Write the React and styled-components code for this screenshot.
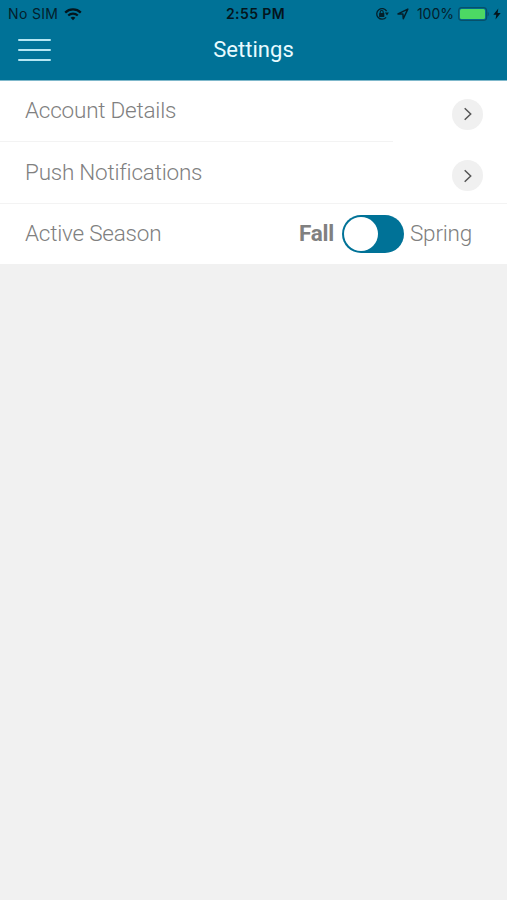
import React, {useState} from 'react';
import styled, {createGlobalStyle} from "styled-components";

const GlobalStyle = createGlobalStyle`
  * {
    box-sizing: border-box;
  }
  body {
    margin: 0;
    background-color: #f1f1f1;
    font-family: Roboto, "Liberation Sans", sans-serif;
  }
`;

const StyledPage = styled.div`
  min-height: 900px;
  background-color: #f1f1f1;
`;

const StyledHeader = styled.header`
  height: 80px;
  background-color: #007297;
`;

const StyledStatusBar = styled.div`
  display: grid;
  grid-template-columns: 1fr auto 1fr;
  align-items: center;
  height: 28px;
  padding: 0 6px 0 8px;
  color: #04202b;
  font-family: Inter, "Liberation Sans", sans-serif;
  font-size: 14px;
  line-height: 28px;
`;

const StyledStatusLeft = styled.div`
  display: flex;
  align-items: center;
  gap: 6px;
  letter-spacing: 0.35px;
`;

const StyledStatusRight = styled.div`
  display: flex;
  align-items: center;
  justify-content: flex-end;
  gap: 8px;
`;

const StyledBattery = styled.div`
  display: flex;
  align-items: center;
  gap: 4px;
`;

const StyledClock = styled.div`
  padding-left: 2px;
  color: #04151c;
  font-weight: 600;
  font-size: 14px;
  letter-spacing: 0.4px;
`;

const StyledTitleBar = styled.div`
  display: grid;
  grid-template-columns: 34px 1fr 34px;
  align-items: center;
  height: 44px;
  padding: 0 17px;
`;

const StyledMenuButton = styled.button`
  display: flex;
  padding: 0;
  border: none;
  background: none;
`;

const StyledTitle = styled.h1`
  margin: 0;
  color: #e9fbff;
  font-size: 22px;
  font-weight: 400;
  line-height: 42px;
  letter-spacing: 0.05px;
  text-align: center;
`;

const StyledList = styled.main`
  height: 184px;
  background-color: #ffffff;
  border-top: 1px solid #7fb8cb;
`;

const StyledRow = styled.div`
  display: flex;
  align-items: center;
  justify-content: space-between;
  height: ${(props) => props.$height}px;
  padding: 0 24px 0 25px;
`;

const StyledDivider = styled.div`
  width: ${(props) => props.$width};
  height: 1px;
  background-color: #f3f3f3;
`;

const StyledLabel = styled.span`
  padding-bottom: 2px;
  color: #808080;
  font-size: 22.5px;
  font-weight: ${(props) => (props.$bold ? 700 : 300)};
  line-height: 58px;
  letter-spacing: -0.22px;
`;

const StyledArrow = styled.span`
  display: flex;
  align-items: center;
  justify-content: center;
  width: 31px;
  height: 31px;
  margin-top: 6px;
  border-radius: 50%;
  background-color: #f0f0f0;
`;

const StyledSeason = styled.div`
  display: flex;
  align-items: center;
  padding-right: 11px;
`;

const StyledSwitch = styled.button`
  display: flex;
  justify-content: ${(props) => (props.$on ? 'flex-end' : 'flex-start')};
  align-items: center;
  width: 62px;
  height: 38px;
  margin: 0 6px 0 8px;
  padding: 2px;
  border: none;
  border-radius: 19px;
  background-color: #007297;
`;

const StyledKnob = styled.span`
  width: 34px;
  height: 34px;
  border-radius: 50%;
  background-color: #ffffff;
`;

const WifiIcon = () => (
    <svg width="18" height="13" viewBox="0 0 18 13" fill="none" stroke="#04151c">
        <path d="M1.2 4.6C5.5 0.4 12.5 0.4 16.8 4.6" strokeWidth="2.3" />
        <path d="M4.2 7.6C6.9 5 11.1 5 13.8 7.6" strokeWidth="2.1" />
        <path d="M6.6 9.8C8 8.5 10 8.5 11.4 9.8L9 12.2Z" fill="#04151c" stroke="none" />
    </svg>
);

const RotationLockIcon = () => (
    <svg width="14" height="14" viewBox="0 0 14 14" fill="none" stroke="#04202b">
        <path d="M11.1 10.3A5.3 5.3 0 1 1 11.6 4.2" strokeWidth="1.3" />
        <path d="M9.9 5.6H13.9L12 8.6Z" fill="#04202b" stroke="none" />
        <rect x="4.1" y="5.9" width="5.2" height="4" rx="0.5" fill="#04202b" stroke="none" />
        <path d="M5.2 6.2V5A1.5 1.5 0 0 1 8.2 5V6.2" strokeWidth="1.1" />
    </svg>
);

const LocationIcon = () => (
    <svg width="12" height="12" viewBox="0 0 12 12" fill="none" stroke="#04202b" strokeWidth="1.5" strokeLinejoin="round">
        <path d="M1 5.9L10.8 1.1L6.3 10.8L5.9 6Z" />
    </svg>
);

const BatteryIcon = () => (
    <svg width="31" height="14" viewBox="0 0 31 14">
        <rect x="0.6" y="0.6" width="28" height="12.8" rx="3.2" fill="none" stroke="#07506a" strokeWidth="1.2" />
        <rect x="2" y="2" width="25" height="10" rx="1.5" fill="#4cd964" />
        <path d="M29.7 4.7C31.1 5.4 31.1 8.6 29.7 9.3Z" fill="#07506a" />
    </svg>
);

const BoltIcon = () => (
    <svg width="8" height="12" viewBox="0 0 8 12">
        <path d="M5.3 0.5L0.3 6.7H3.3L2.5 11.5L7.7 5.1H4.6Z" fill="#04151c" />
    </svg>
);

const MenuIcon = () => (
    <svg width="34" height="24" viewBox="0 0 34 24" stroke="#b5e7f3" strokeWidth="2" strokeLinecap="round">
        <path d="M2 2H33M2 12H33M2 22H33" />
    </svg>
);

const ChevronIcon = () => (
    <svg width="9" height="14" viewBox="0 0 9 14" fill="none" stroke="#555555" strokeWidth="1.5">
        <path d="M1.7 1.2L7.7 7L1.7 12.8" />
    </svg>
);

const App = () => {
    const [spring, setSpring] = useState(false);

    return (
        <StyledPage>
            <GlobalStyle />
            <StyledHeader>
                <StyledStatusBar>
                    <StyledStatusLeft>
                        <span>No SIM</span>
                        <WifiIcon />
                    </StyledStatusLeft>
                    <StyledClock>2:55 PM</StyledClock>
                    <StyledStatusRight>
                        <RotationLockIcon />
                        <LocationIcon />
                        <StyledBattery>
                            <span>100%</span>
                            <BatteryIcon />
                            <BoltIcon />
                        </StyledBattery>
                    </StyledStatusRight>
                </StyledStatusBar>
                <StyledTitleBar>
                    <StyledMenuButton aria-label="Menu">
                        <MenuIcon />
                    </StyledMenuButton>
                    <StyledTitle>Settings</StyledTitle>
                </StyledTitleBar>
            </StyledHeader>
            <StyledList>
                <StyledRow $height={60}>
                    <StyledLabel>Account Details</StyledLabel>
                    <StyledArrow><ChevronIcon /></StyledArrow>
                </StyledRow>
                <StyledDivider $width="393px" />
                <StyledRow $height={61}>
                    <StyledLabel>Push Notifications</StyledLabel>
                    <StyledArrow><ChevronIcon /></StyledArrow>
                </StyledRow>
                <StyledDivider $width="100%" />
                <StyledRow $height={60}>
                    <StyledLabel>Active Season</StyledLabel>
                    <StyledSeason>
                        <StyledLabel $bold={!spring}>Fall</StyledLabel>
                        <StyledSwitch $on={spring} aria-label="Active Season" onClick={() => setSpring(!spring)}>
                            <StyledKnob />
                        </StyledSwitch>
                        <StyledLabel $bold={spring}>Spring</StyledLabel>
                    </StyledSeason>
                </StyledRow>
            </StyledList>
        </StyledPage>
    );
};

export default App;
